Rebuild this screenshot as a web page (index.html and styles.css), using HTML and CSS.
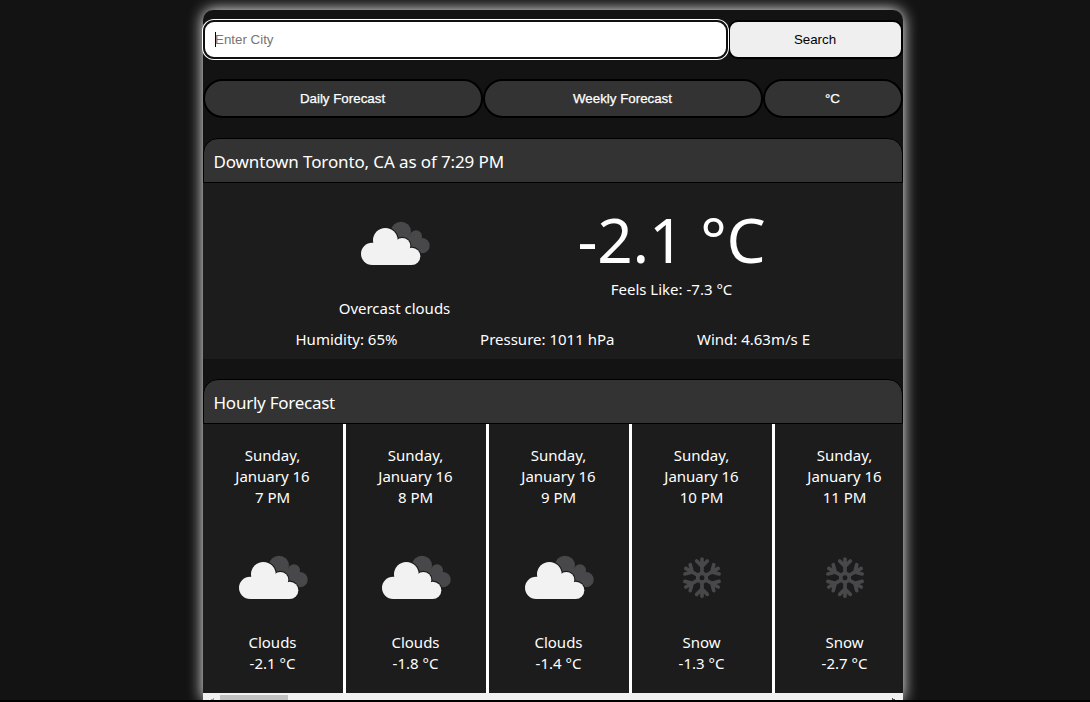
FILE: index.html
```html
<!DOCTYPE html>
<html lang="en">
<head>
<meta charset="utf-8">
<title>Weather</title>
<link rel="stylesheet" href="styles.css">
</head>
<body>
<svg class="defs" aria-hidden="true">
  <symbol id="clouds" viewBox="0 0 300 300">
    <defs><g id="cloud-front"><circle cx="81.500" cy="179.500" r="33.500"/><circle cx="121" cy="139" r="37"/><circle cx="172" cy="156" r="24"/><circle cx="200" cy="187" r="26"/><path d="M81.500 213H200V187L172 150H121L81.500 165Z"/></g></defs>
    <g fill="#48484a"><circle cx="168" cy="113" r="30"/><circle cx="213" cy="127" r="18"/><circle cx="231" cy="155" r="23"/><path d="M168 113L213 127L231 155L218 178L158 150Z"/></g>
    <use href="#cloud-front" fill="#1c1c1c" stroke="#1c1c1c" stroke-width="7"/>
    <use href="#cloud-front" fill="#f2f2f2"/>
  </symbol>
  <symbol id="snow" viewBox="0 0 300 300">
    <defs><path id="arm" d="M0 -13V-56M-16 -50L0 -34L16 -50"/></defs>
    <g transform="translate(150 149)" fill="none" stroke="#48484a" stroke-width="11" stroke-linecap="round">
      <circle r="13"/>
      <use href="#arm"/><use href="#arm" transform="rotate(60)"/><use href="#arm" transform="rotate(120)"/><use href="#arm" transform="rotate(180)"/><use href="#arm" transform="rotate(240)"/><use href="#arm" transform="rotate(300)"/>
    </g>
  </symbol>
</svg>
<main class="app">
  <div class="row search-row">
    <div class="field"><span class="caret"></span>Enter City</div>
    <button class="search">Search</button>
  </div>
  <div class="row tabs">
    <button class="tab">Daily Forecast</button>
    <button class="tab">Weekly Forecast</button>
    <button class="tab unit">°C</button>
  </div>
  <section class="current">
    <h2 class="title">Downtown Toronto, CA as of 7:29 PM</h2>
    <div class="body">
      <div class="summary">
        <div class="condition"><svg class="icon"><use href="#clouds"/></svg><span>Overcast clouds</span></div>
        <div class="reading"><div class="temp">-2.1 °C</div><div class="feels">Feels Like: -7.3 °C</div></div>
      </div>
      <div class="stats"><span>Humidity: 65%</span><span>Pressure: 1011 hPa</span><span>Wind: 4.63m/s E</span></div>
    </div>
  </section>
  <section class="hourly">
    <h2 class="title hourly-title">Hourly Forecast</h2>
    <div class="cards">
      <div class="card"><span>Sunday,</span><span>January 16</span><span>7 PM</span><svg class="icon"><use href="#clouds"/></svg><span>Clouds</span><span>-2.1 °C</span></div>
      <div class="card"><span>Sunday,</span><span>January 16</span><span>8 PM</span><svg class="icon"><use href="#clouds"/></svg><span>Clouds</span><span>-1.8 °C</span></div>
      <div class="card"><span>Sunday,</span><span>January 16</span><span>9 PM</span><svg class="icon"><use href="#clouds"/></svg><span>Clouds</span><span>-1.4 °C</span></div>
      <div class="card"><span>Sunday,</span><span>January 16</span><span>10 PM</span><svg class="icon"><use href="#snow"/></svg><span>Snow</span><span>-1.3 °C</span></div>
      <div class="card"><span>Sunday,</span><span>January 16</span><span>11 PM</span><svg class="icon"><use href="#snow"/></svg><span>Snow</span><span>-2.7 °C</span></div>
    </div>
    <div class="scrollbar"><i class="arrow left"></i><i class="thumb"></i><i class="arrow right"></i></div>
  </section>
</main>
<div class="edge"></div>
</body>
</html>
```

FILE: styles.css
```css
* { box-sizing: border-box; }
html { overflow: hidden; }
body {
  margin: 0;
  height: 702px;
  padding-top: 10px;
  overflow: hidden;
  display: flex;
  flex-direction: column;
  background: #131313;
  color: #fff;
  font: 15px/21px "Noto Sans", sans-serif;
}
.defs { position: absolute; width: 0; height: 0; }
.app {
  width: 700px;
  height: 690px;
  flex: none;
  margin-left: 203px;
  padding-top: 10px;
  border-radius: 10px 10px 0 0;
  background: #131313;
  box-shadow: 0 0 15px #fff;
}
.row { display: flex; height: 39px; margin-bottom: 20px; }
.field, .search, .tab { font: 13.333px/15px "Liberation Sans", Arial, sans-serif; }
.field {
  width: 525px;
  padding: 10px;
  border: 2px solid #101010;
  border-radius: 11px;
  background: #fff;
  color: #757575;
  box-shadow: 0 0 0 1px #fff;
  display: flex;
  z-index: 1;
}
.caret { width: 1px; height: 15px; background: #000; margin-right: -1px; }
.search {
  width: 175px;
  padding: 0 1px 0 0;
  border: 2px solid #000;
  border-radius: 10px;
  background: #efefef;
  color: #000;
}
.tab {
  width: 280px;
  padding: 0 1px 0 0;
  border: 2px solid #000;
  border-radius: 20px;
  background: #333;
  color: #fff;
  -webkit-text-stroke: 0.25px #fff;
}
.unit { width: 140px; }
.title {
  height: 45px;
  margin: 0;
  padding: 0 9.5px;
  border: 1px solid #000;
  border-radius: 15px 15px 0 0;
  background: #333;
  font-size: 17px;
  font-weight: 400;
  line-height: 45px;
  letter-spacing: -0.12px;
}
.hourly-title { letter-spacing: -0.25px; }
.body { height: 176px; padding-top: 11px; background: #1c1c1c; }
.summary { display: flex; height: 125px; padding-left: 52px; }
.condition { width: 279px; display: flex; flex-direction: column; align-items: center; }
.condition .icon { margin-bottom: 4px; }
.reading { width: 275px; text-align: center; }
.temp { font-size: 62px; line-height: 90px; height: 85px; letter-spacing: -0.2px; }
.stats { display: flex; justify-content: space-between; padding: 10px 93px 0 92.5px; }
.hourly { margin-top: 20px; }
.icon { display: block; flex: none; width: 100px; height: 100px; }
.cards { display: flex; height: 269px; overflow: hidden; background: #1c1c1c; }
.card {
  flex: none;
  width: 143px;
  padding: 21px 1px 0 0;
  border-right: 3px solid #fff;
  display: flex;
  flex-direction: column;
  align-items: center;
}
.card .icon { margin: 20px 0 4px; position: relative; left: 0.5px; }
.scrollbar { height: 7px; display: flex; justify-content: space-between; background: #f1f1f1; padding: 2px 7px 0; }
.thumb { width: 68px; margin-left: 6px; margin-right: auto; height: 5px; background: #c1c1c1; }
.arrow { width: 4px; height: 2px; margin-top: 3px; }
.left { background: linear-gradient(to top left, #a3a3a3 50%, transparent 50%); }
.right { background: linear-gradient(to top right, #505050 50%, transparent 50%); }
.edge { height: 2px; flex: none; background: #000; z-index: 1; }
```
